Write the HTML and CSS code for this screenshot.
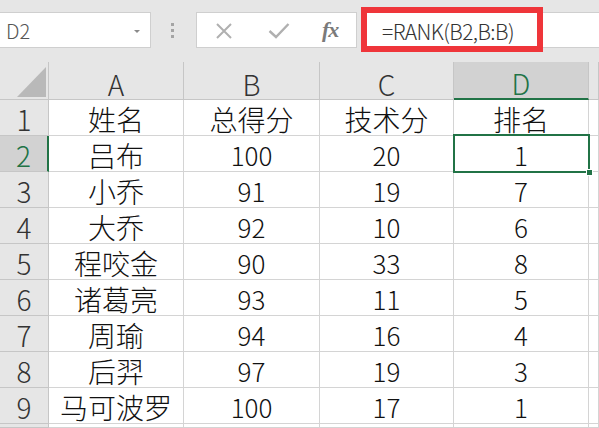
FILE: index.html
```html
<!DOCTYPE html>
<html lang="zh-CN">
<head>
<meta charset="utf-8">
<link rel="stylesheet" href="styles.css">
</head>
<body>
<div class="app">
  <div class="toolbar">
    <div class="namebox"><span class="ref">D2</span><span class="caret"></span></div>
    <div class="dots"><i></i><i></i><i></i></div>
    <div class="fxbox">
      <svg class="ico-x" width="18" height="16" viewBox="0 0 18 16"><path d="M2 1 L16 15 M16 1 L2 15" stroke="#b0b0b0" stroke-width="2" fill="none"/></svg>
      <svg class="ico-check" width="22" height="17" viewBox="0 0 22 17"><path d="M1.5 9 L8 15 L20.5 2" stroke="#b0b0b0" stroke-width="2.4" fill="none"/></svg>
      <span class="fx">fx</span>
    </div>
    <div class="formula"><span class="ftext">=RANK(B2,B:B)</span></div>
    <div class="highlight"></div>
  </div>
  <div class="sheet">
    <div class="hd corner"><svg class="tri" width="29" height="30" viewBox="0 0 29 30"><path d="M0 30 L29 30 L29 0 Z" fill="#b9b9b9"/></svg></div>
    <div class="hd col">A</div>
    <div class="hd col">B</div>
    <div class="hd col">C</div>
    <div class="hd col sel">D</div>
    <div class="hd col"></div>

    <div class="hd row">1</div><div class="c t">姓名</div><div class="c t">总得分</div><div class="c t">技术分</div><div class="c t">排名</div><div class="c"></div>
    <div class="hd row sel">2</div><div class="c t">吕布</div><div class="c">100</div><div class="c">20</div><div class="c active">1<span class="selbox"><span class="handle"></span></span></div><div class="c"></div>
    <div class="hd row">3</div><div class="c t">小乔</div><div class="c">91</div><div class="c">19</div><div class="c">7</div><div class="c"></div>
    <div class="hd row">4</div><div class="c t">大乔</div><div class="c">92</div><div class="c">10</div><div class="c">6</div><div class="c"></div>
    <div class="hd row">5</div><div class="c t">程咬金</div><div class="c">90</div><div class="c">33</div><div class="c">8</div><div class="c"></div>
    <div class="hd row">6</div><div class="c t">诸葛亮</div><div class="c">93</div><div class="c">11</div><div class="c">5</div><div class="c"></div>
    <div class="hd row">7</div><div class="c t">周瑜</div><div class="c">94</div><div class="c">16</div><div class="c">4</div><div class="c"></div>
    <div class="hd row">8</div><div class="c t">后羿</div><div class="c">97</div><div class="c">19</div><div class="c">3</div><div class="c"></div>
    <div class="hd row">9</div><div class="c t">马可波罗</div><div class="c">100</div><div class="c">17</div><div class="c">1</div><div class="c"></div>
    <div class="hd row"></div><div class="c"></div><div class="c"></div><div class="c"></div><div class="c"></div><div class="c"></div>
  </div>
</div>
</body>
</html>
```
FILE: styles.css
```css
* { box-sizing: border-box; }
html, body { margin: 0; padding: 0; }
body {
  width: 599px;
  height: 428px;
  overflow: hidden;
  background: #ffffff;
  font-family: "Noto Sans CJK SC", "Noto Sans", sans-serif;
  font-weight: 300;
}
.app { width: 599px; height: 428px; overflow: hidden; }

.toolbar {
  position: relative;
  height: 62px;
  background: #e6e6e6;
  display: flex;
  align-items: flex-start;
  padding-top: 12px;
}
.namebox {
  width: 151px;
  height: 36px;
  background: #fff;
  border: 1px solid #cfcfcf;
  border-left: none;
  display: flex;
  align-items: center;
  padding-left: 6px;
  padding-right: 10px;
  justify-content: space-between;
}
.ref { font-size: 20px; color: #555; line-height: 1; padding-top: 1px; }
.caret {
  width: 0; height: 0;
  border-left: 3px solid transparent;
  border-right: 3px solid transparent;
  border-top: 3px solid #8a8a8a;
  margin-top: 2px;
}
.dots {
  margin-left: 20px;
  width: 3px;
  display: flex;
  flex-direction: column;
  gap: 3px;
  padding-top: 11px;
}
.dots i { display: block; width: 3px; height: 3px; background: #a4a4a4; }
.fxbox {
  margin-left: 22px;
  width: 161px;
  height: 36px;
  background: #fff;
  border: 1px solid #cfcfcf;
  display: flex;
  align-items: center;
  padding-left: 18px;
}
.ico-x { margin-top: 2px; }
.ico-check { margin-left: 35px; margin-top: 0px; }
.fx {
  margin-left: 32px;
  font-family: "Liberation Serif", "DejaVu Serif", serif;
  font-style: italic;
  font-weight: 700;
  font-size: 22px;
  color: #7a7a7a;
  letter-spacing: -1px;
}
.formula {
  margin-left: 4px;
  flex: 1;
  height: 36px;
  background: #fff;
  border-top: 1px solid #cfcfcf;
  border-bottom: 1px solid #cfcfcf;
  display: flex;
  align-items: center;
  padding-left: 21px;
}
.ftext { font-size: 21px; color: #333; letter-spacing: -0.6px; line-height: 1; padding-top: 3px; }
.highlight {
  position: absolute;
  left: 361px;
  top: 7px;
  width: 182px;
  height: 45px;
  border: 6px solid #ef353a;
}

.sheet {
  display: grid;
  grid-template-columns: 49px 135px 136px 134px 135px 10px;
  grid-template-rows: 38px repeat(9, 36px) 4px;
}
.hd {
  background: #e6e6e6;
  color: #333;
  border-right: 1px solid #c6c6c6;
  border-bottom: 1px solid #c6c6c6;
  display: flex;
  align-items: center;
  justify-content: center;
  font-size: 28px;
  line-height: 1;
}
.hd.col { padding-top: 6px; }
.hd.row { padding-top: 2px; }
.corner { position: relative; }
.tri { position: absolute; left: 17px; bottom: 2px; }
.hd.col.sel {
  background: #d2d2d2;
  color: #217346;
  border-bottom: 2px solid #217346;
}
.hd.row.sel {
  background: #d2d2d2;
  color: #217346;
  border-right: 2px solid #217346;
}
.c {
  border-right: 1px solid #d4d4d4;
  border-bottom: 1px solid #d4d4d4;
  display: flex;
  align-items: center;
  justify-content: center;
  font-size: 26px;
  line-height: 1;
  color: #111;
  padding-top: 3px;
}
.c.t { font-size: 28px; padding-top: 2px; }
.active { position: relative; }
.selbox {
  position: absolute;
  left: -1px;
  top: -2px;
  right: -2px;
  bottom: -2px;
  border: 2px solid #217346;
}
.handle {
  position: absolute;
  right: -5px;
  bottom: -5px;
  width: 7px;
  height: 7px;
  background: #217346;
  border: 1px solid #fff;
}
```
